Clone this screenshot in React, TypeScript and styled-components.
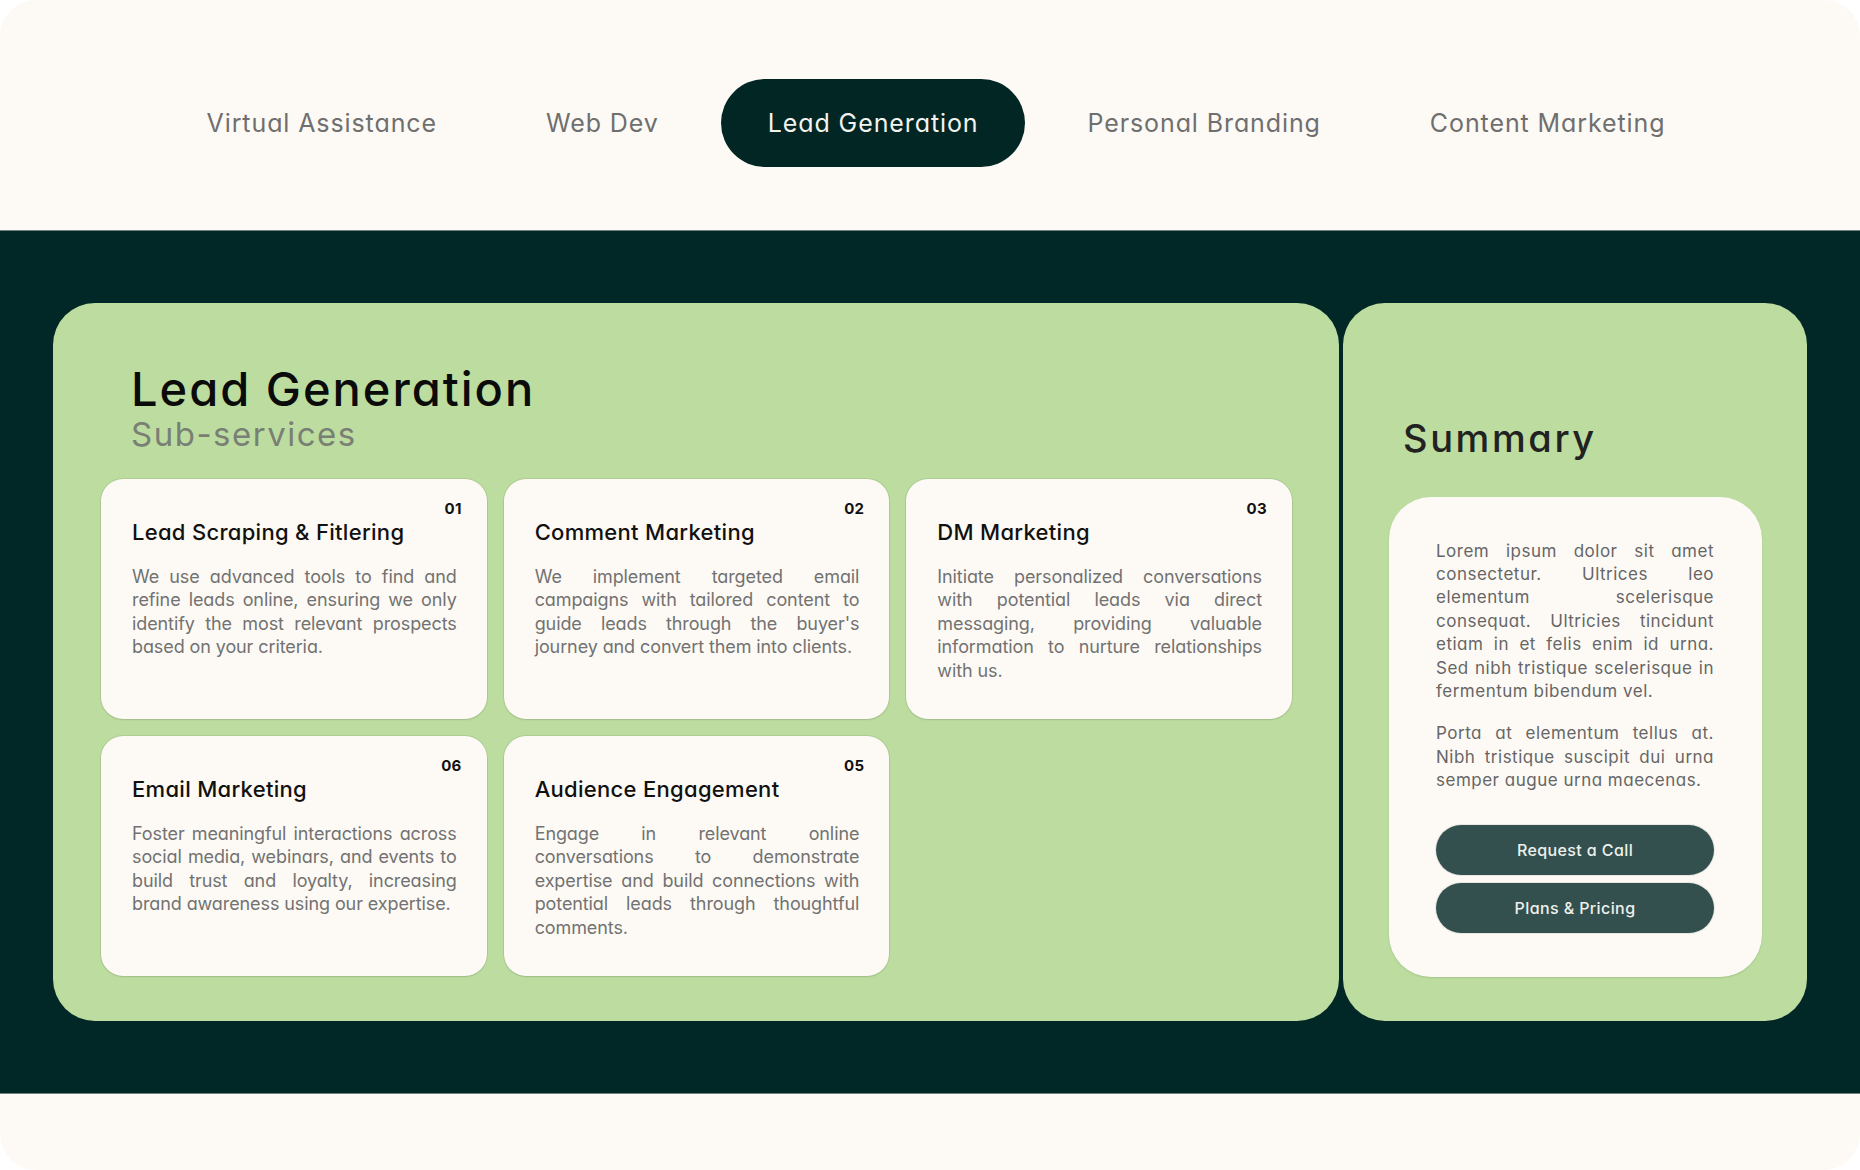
import React from "react";
import styled, { createGlobalStyle } from "styled-components";

const GlobalStyle = createGlobalStyle`
  html, body {
    margin: 0;
    padding: 0;
    background: #ffffff;
  }
  * { box-sizing: border-box; }
  body {
    font-family: Inter, "Noto Sans", "Liberation Sans", sans-serif;
    font-feature-settings: "cv11" 1;
    -webkit-font-smoothing: antialiased;
  }
`;

const Page = styled.div`
  width: 1860px;
  height: 1170px;
  background: #fdfaf5;
  border-radius: 36px;
  overflow: hidden;
  display: flex;
  flex-direction: column;
`;

const TabBar = styled.nav`
  height: 230px;
  padding: 79px 0 0 12px;
  display: flex;
  justify-content: center;
  align-items: flex-start;
  gap: 15px;
`;

const Tab = styled.button<{ $active?: boolean }>`
  height: 88px;
  padding: 0 47px;
  border: none;
  border-radius: 44px;
  background: ${(p) => (p.$active ? "#012624" : "transparent")};
  color: ${(p) => (p.$active ? "#f3f3ef" : "#6f6f6f")};
  font-family: Inter, "Noto Sans", sans-serif;
  font-feature-settings: "cv11" 1;
  font-size: 25px;
  font-weight: 400;
  letter-spacing: 0.9px;
  cursor: pointer;
  white-space: nowrap;
`;

const Band = styled.section`
  height: 864px;
  background: #012726;
  border-top: 1px solid #6f8480;
  border-bottom: 1px solid #6f8480;
  padding: 72px 53px;
  display: flex;
  gap: 4px;
`;

const MainPanel = styled.div`
  width: 1286px;
  height: 718px;
  background: #bcdd9f;
  border-radius: 42px;
  padding: 60px 47px 0 48px;
  display: flex;
  flex-direction: column;
`;

const Header = styled.header`
  padding-left: 30px;
  margin-bottom: 24px;
`;

const Title = styled.h1`
  margin: 0;
  font-size: 47px;
  line-height: 52px;
  font-weight: 500;
  color: #0b0b0b;
  letter-spacing: 2px;
`;

const Subtitle = styled.h2`
  margin: 0;
  font-size: 33px;
  line-height: 39.6px;
  font-weight: 400;
  color: #7a7f76;
  letter-spacing: 1.5px;
`;

const Grid = styled.div`
  display: grid;
  grid-template-columns: repeat(3, 1fr);
  grid-auto-rows: 240px;
  gap: 17px 17px;
`;

const Card = styled.article`
  background: #fdfaf5;
  border-radius: 22px;
  box-shadow: 0 0 0 1px rgba(0, 0, 0, 0.07), 0 1px 2px rgba(0, 0, 0, 0.08);
  padding: 23px 30px 0 31px;
  display: flex;
  flex-direction: column;
`;

const Num = styled.span`
  align-self: flex-end;
  margin-right: -5px;
  font-size: 15px;
  line-height: 14px;
  font-weight: 700;
  color: #111;
  letter-spacing: 0.3px;
  margin-bottom: 3px;
`;

const CardTitle = styled.h3`
  margin: 0 0 20px;
  font-size: 22px;
  line-height: 26.4px;
  font-weight: 500;
  color: #111;
  letter-spacing: 0.3px;
`;

const CardText = styled.p`
  margin: 0;
  font-size: 18px;
  line-height: 23.4px;
  color: #727272;
  text-align: justify;
  letter-spacing: -0.1px;
`;

const SidePanel = styled.aside`
  width: 464px;
  height: 718px;
  background: #bcdd9f;
  border-radius: 42px;
  padding: 113px 45px 44px 46px;
  display: flex;
  flex-direction: column;
`;

const SideTitle = styled.h2`
  margin: 0 0 35px 14px;
  font-size: 38px;
  line-height: 45.6px;
  font-weight: 500;
  color: #222;
  letter-spacing: 2.6px;
`;

const SummaryCard = styled.div`
  flex: 1;
  background: #fdfaf5;
  border-radius: 42px;
  box-shadow: 0 1px 2px rgba(0, 0, 0, 0.12);
  padding: 43px 48px 0 47px;
  display: flex;
  flex-direction: column;
`;

const SummaryText = styled.p`
  margin: 0 0 19px;
  font-size: 17px;
  line-height: 23.4px;
  color: #666;
  text-align: justify;
  letter-spacing: 0.5px;
`;

const Actions = styled.div`
  margin-top: 13px;
  display: flex;
  flex-direction: column;
  gap: 8px;
`;

const ActionButton = styled.button`
  height: 50px;
  border: none;
  border-radius: 25px;
  background: #33504f;
  box-shadow: 0 0 0 1px rgba(0, 0, 0, 0.08);
  color: #eef0ec;
  font-family: Inter, "Noto Sans", sans-serif;
  font-feature-settings: "cv11" 1;
  font-size: 16px;
  font-weight: 500;
  letter-spacing: 0.4px;
  cursor: pointer;
`;

const tabs = [
  "Virtual Assistance",
  "Web Dev",
  "Lead Generation",
  "Personal Branding",
  "Content Marketing",
];

const services = [
  {
    num: "01",
    title: "Lead Scraping & Fitlering",
    text: "We use advanced tools to find and refine leads online, ensuring we only identify the most relevant prospects based on your criteria.",
  },
  {
    num: "02",
    title: "Comment Marketing",
    text: "We implement targeted email campaigns with tailored content to guide leads through the buyer's journey and convert them into clients.",
  },
  {
    num: "03",
    title: "DM Marketing",
    text: "Initiate personalized conversations with potential leads via direct messaging, providing valuable information to nurture relationships with us.",
  },
  {
    num: "06",
    title: "Email Marketing",
    text: "Foster meaningful interactions across social media, webinars, and events to build trust and loyalty, increasing brand awareness using our expertise.",
  },
  {
    num: "05",
    title: "Audience Engagement",
    text: "Engage in relevant online conversations to demonstrate expertise and build connections with potential leads through thoughtful comments.",
  },
];

export default function App() {
  return (
    <>
      <GlobalStyle />
      <Page>
        <TabBar>
          {tabs.map((t) => (
            <Tab key={t} $active={t === "Lead Generation"}>
              {t}
            </Tab>
          ))}
        </TabBar>
        <Band>
          <MainPanel>
            <Header>
              <Title>Lead Generation</Title>
              <Subtitle>Sub-services</Subtitle>
            </Header>
            <Grid>
              {services.map((s) => (
                <Card key={s.num}>
                  <Num>{s.num}</Num>
                  <CardTitle>{s.title}</CardTitle>
                  <CardText>{s.text}</CardText>
                </Card>
              ))}
            </Grid>
          </MainPanel>
          <SidePanel>
            <SideTitle>Summary</SideTitle>
            <SummaryCard>
              <SummaryText>
                Lorem ipsum dolor sit amet consectetur. Ultrices leo elementum
                scelerisque consequat. Ultricies tincidunt etiam in et felis
                enim id urna. Sed nibh tristique scelerisque in fermentum
                bibendum vel.
              </SummaryText>
              <SummaryText>
                Porta at elementum tellus at. Nibh tristique suscipit dui urna
                semper augue urna maecenas.
              </SummaryText>
              <Actions>
                <ActionButton>Request a Call</ActionButton>
                <ActionButton>Plans &amp; Pricing</ActionButton>
              </Actions>
            </SummaryCard>
          </SidePanel>
        </Band>
      </Page>
    </>
  );
}
